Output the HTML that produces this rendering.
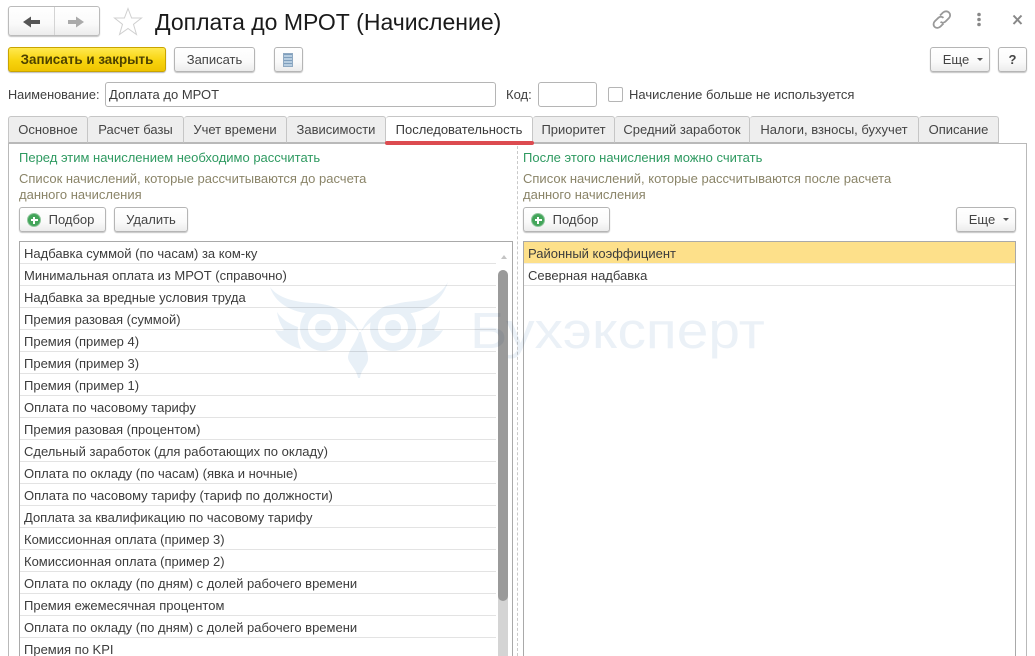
<!DOCTYPE html>
<html lang="ru"><head><meta charset="utf-8"><title>Доплата до МРОТ</title>
<style>
html,body{margin:0;padding:0;background:#fff}
#p{position:relative;width:1035px;height:656px;overflow:hidden;background:#fff;font:13px "Liberation Sans",sans-serif;color:#3f3f3f}
#p div,#p span.a{position:absolute;box-sizing:border-box;white-space:nowrap}
.btn{height:25px;border:1px solid #b5b5b5;border-radius:3px;background:linear-gradient(#fff 0%,#fafafa 60%,#ececec 100%);box-shadow:0 1px 1px #c4c4c4;text-align:center;line-height:23px;color:#444}
.tab{top:116px;height:27px;border:1px solid #c6c6c6;border-bottom:1px solid #b9b9b9;border-left:0;border-radius:3px 3px 0 0;background:#eee;text-align:center;line-height:25px;color:#444}
.row{left:0;height:22px;border-bottom:1px solid #e3e3e3;padding-left:4px;line-height:23px;color:#3c3c3c}
.plus{left:7px;top:5px;width:14px;height:14px;border-radius:50%;background:#43a55a;border:1px solid #8fc79c}
.plus:before{content:"";position:absolute;left:2.5px;top:5px;width:7px;height:2px;background:#fff}
.plus:after{content:"";position:absolute;left:5px;top:2.5px;width:2px;height:7px;background:#fff}
.l{color:#3f3f3f;line-height:16px}
</style></head><body><div id="p">

<div class="btn" style="left:8px;top:6px;width:92px;height:30px;border-color:#bbb"></div>
<div style="left:54px;top:7px;width:1px;height:28px;background:#d4d4d4"></div>
<svg style="position:absolute;left:8px;top:6px" width="92" height="30"><path d="M15 16L23 10.500V14H32V18H23V21.500Z" fill="#555"/><path d="M76 16L68 10.500V14H60V18H68V21.500Z" fill="#aaa"/></svg>
<svg style="position:absolute;left:113px;top:7px" width="30" height="30"><path d="M15 1.500L18.600 11H28.500L20.500 17.300L23.500 27.500L15 21.500L6.500 27.500L9.500 17.300L1.500 11H11.400Z" fill="#fff" stroke="#d0d0d0" stroke-width="1"/></svg>
<div style="left:155px;top:8px;font-size:23px;line-height:28px;color:#1a1a1a">Доплата до МРОТ (Начисление)</div>

<svg style="position:absolute;left:931px;top:9px" width="22" height="22"><g fill="none" stroke="#999" stroke-width="1.800"><path d="M9 6.500L12 3.500C14 1.800 16.500 2 18 3.500C19.500 5 19.500 7.500 18 9L14.500 12.500C13 14 11 14 9.500 12.800"/><path d="M12.500 14.500L9.500 17.500C8 19 5.500 19.500 3.800 18C2 16.300 2.300 13.800 3.800 12.300L7.500 8.700C9 7.300 11 7.500 12.500 8.800"/></g></svg>
<svg style="position:absolute;left:975px;top:12px" width="10" height="16"><g fill="#888"><circle cx="4" cy="2.500" r="1.800"/><circle cx="4" cy="7.500" r="1.800"/><circle cx="4" cy="12.500" r="1.800"/></g></svg>
<svg style="position:absolute;left:1011px;top:13px" width="14" height="14"><path d="M2.500 2.500L10.500 11M10.500 2.500L2.500 11" stroke="#888" stroke-width="2"/></svg>

<div class="btn" style="left:8px;top:47px;width:158px;border-color:#c9a400;background:linear-gradient(#ffe94f,#f8d40e 55%,#efc400);font-weight:bold;font-size:13.4px;color:#4d4100;box-shadow:0 1px 1px #bbb">Записать и закрыть</div>
<div class="btn" style="left:174px;top:47px;width:81px">Записать</div>
<div class="btn" style="left:274px;top:47px;width:29px"></div>
<div style="left:283px;top:53px;width:10px;height:14px;background:repeating-linear-gradient(#7f9fbd 0,#7f9fbd 1px,#b7cde0 1px,#b7cde0 3px);border:1px solid #8fa9c2"></div>
<div class="btn" style="left:930px;top:47px;width:60px;padding-right:8px">Еще</div>
<div style="left:977px;top:58px;border:3px solid transparent;border-top:3px solid #555"></div>
<div class="btn" style="left:998px;top:47px;width:29px;font-weight:bold">?</div>

<div class="l" style="left:8px;top:87px;font-size:12.7px">Наименование:</div>
<div style="left:105px;top:82px;width:391px;height:25px;border:1px solid #b5b5b5;border-radius:3px;padding-left:3px;line-height:23px;color:#3c3c3c">Доплата до МРОТ</div>
<div class="l" style="left:506px;top:87px">Код:</div>
<div style="left:538px;top:82px;width:59px;height:25px;border:1px solid #b5b5b5;border-radius:3px"></div>
<div style="left:608px;top:87px;width:15px;height:15px;border:1px solid #b5b5b5;border-radius:2px"></div>
<div class="l" style="left:629px;top:87px">Начисление больше не используется</div>

<div style="left:8px;top:143px;width:1019px;height:520px;border:1px solid #b9b9b9"></div>
<div class="tab" style="left:8px;width:80px;border-left:1px solid #c6c6c6">Основное</div>
<div class="tab" style="left:88px;width:96px">Расчет базы</div>
<div class="tab" style="left:184px;width:103px">Учет времени</div>
<div class="tab" style="left:287px;width:99px">Зависимости</div>
<div class="tab" style="left:386px;width:147px;background:#fff;color:#3a3a3a">Последовательность</div>
<div class="tab" style="left:533px;width:82px">Приоритет</div>
<div class="tab" style="left:615px;width:135px">Средний заработок</div>
<div class="tab" style="left:750px;width:169px">Налоги, взносы, бухучет</div>
<div class="tab" style="left:919px;width:80px">Описание</div>
<div style="left:385px;top:141px;width:149px;height:4px;background:#dc4b50;border-radius:2px"></div>

<div style="left:19px;top:150px;line-height:16px;color:#2f9a61">Перед этим начислением необходимо рассчитать</div>
<div style="left:19px;top:171px;line-height:16px;color:#8a8468;white-space:normal">Список начислений, которые рассчитываются до расчета<br>данного начисления</div>
<div class="btn" style="left:19px;top:207px;width:87px;padding-left:18px"><div class="plus"></div>Подбор</div>
<div class="btn" style="left:114px;top:207px;width:74px">Удалить</div>

<div style="left:517px;top:146px;width:0;height:510px;border-left:1px dashed #c9c9c9"></div>

<div style="left:523px;top:150px;line-height:16px;color:#2f9a61">После этого начисления можно считать</div>
<div style="left:523px;top:171px;line-height:16px;color:#8a8468">Список начислений, которые рассчитываются после расчета<br>данного начисления</div>
<div class="btn" style="left:523px;top:207px;width:87px;padding-left:18px"><div class="plus"></div>Подбор</div>
<div class="btn" style="left:956px;top:207px;width:60px;padding-right:8px">Еще</div>
<div style="left:1003px;top:218px;border:3px solid transparent;border-top:3px solid #555"></div>

<div style="left:19px;top:241px;width:494px;height:430px;border:1px solid #a9a9a9;overflow:hidden">
<div class="row" style="top:0;width:476px">Надбавка суммой (по часам) за ком-ку</div>
<div class="row" style="top:22px;width:476px">Минимальная оплата из МРОТ (справочно)</div>
<div class="row" style="top:44px;width:476px">Надбавка за вредные условия труда</div>
<div class="row" style="top:66px;width:476px">Премия разовая (суммой)</div>
<div class="row" style="top:88px;width:476px">Премия (пример 4)</div>
<div class="row" style="top:110px;width:476px">Премия (пример 3)</div>
<div class="row" style="top:132px;width:476px">Премия (пример 1)</div>
<div class="row" style="top:154px;width:476px">Оплата по часовому тарифу</div>
<div class="row" style="top:176px;width:476px">Премия разовая (процентом)</div>
<div class="row" style="top:198px;width:476px">Сдельный заработок (для работающих по окладу)</div>
<div class="row" style="top:220px;width:476px">Оплата по окладу (по часам) (явка и ночные)</div>
<div class="row" style="top:242px;width:476px">Оплата по часовому тарифу (тариф по должности)</div>
<div class="row" style="top:264px;width:476px">Доплата за квалификацию по часовому тарифу</div>
<div class="row" style="top:286px;width:476px">Комиссионная оплата (пример 3)</div>
<div class="row" style="top:308px;width:476px">Комиссионная оплата (пример 2)</div>
<div class="row" style="top:330px;width:476px">Оплата по окладу (по дням) с долей рабочего времени</div>
<div class="row" style="top:352px;width:476px">Премия ежемесячная процентом</div>
<div class="row" style="top:374px;width:476px">Оплата по окладу (по дням) с долей рабочего времени</div>
<div class="row" style="top:396px;width:476px">Премия по KPI</div>
<div style="left:481px;top:10px;border:3px solid transparent;border-bottom:4px solid #c4c4c4"></div>
<div style="left:478px;top:28px;width:10px;height:410px;background:#d4d4d4;border-radius:5px 5px 0 0"></div>
<div style="left:478px;top:28px;width:10px;height:331px;background:#9a9a9a;border-radius:5px"></div>
</div>

<div style="left:523px;top:241px;width:493px;height:430px;border:1px solid #a9a9a9;overflow:hidden">
<div class="row" style="top:0;width:491px;background:#fde08a;border-bottom-color:#eee">Районный коэффициент</div>
<div class="row" style="top:22px;width:491px">Северная надбавка</div>
</div>

<svg style="position:absolute;left:268px;top:278px;mix-blend-mode:multiply" width="190" height="112" viewBox="0 0 190 112">
<g fill="#e8f0f7">
<path d="M2 9C10 20 26 24 44 25C66 26 84 34 91 54C82 42 68 36 50 36C28 36 8 28 2 9Z"/>
<path d="M180 4C172 18 160 22 147 23C122 25 102 32 93 54C102 42 114 36 132 36C156 36 174 24 180 4Z"/>
<path d="M9 34C14 42 22 46 30 49C29 58 30 64 33 71C22 68 12 62 7 52C12 53 14 53 16 52C12 46 10 40 9 34Z"/>
<path d="M172 32C167 40 160 45 154 47C155 56 153 63 149 70C160 67 170 61 175 52C170 53 168 53 166 52C170 46 171 40 172 32Z"/>
<path d="M91 54L93 54C95 66 101 74 100 82C99 88 93 92 92 100L90 100C89 92 81 86 80 80C80 72 88 66 91 54Z"/>
<path fill-rule="evenodd" d="M55 27a23 23 0 1 0 .1 0ZM55 35a15 15 0 1 1-.1 0ZM55 42a8 8 0 1 0 .1 0Z"/>
<path fill-rule="evenodd" d="M125 27a23 23 0 1 0 .1 0ZM125 35a15 15 0 1 1-.1 0ZM125 42a8 8 0 1 0 .1 0Z"/>
</g></svg>
<div style="left:470px;top:301px;font-size:51px;line-height:60px;color:#ebf1f7;mix-blend-mode:multiply;transform:scaleX(1.115);transform-origin:0 50%">Бухэксперт</div>

</div></body></html>
